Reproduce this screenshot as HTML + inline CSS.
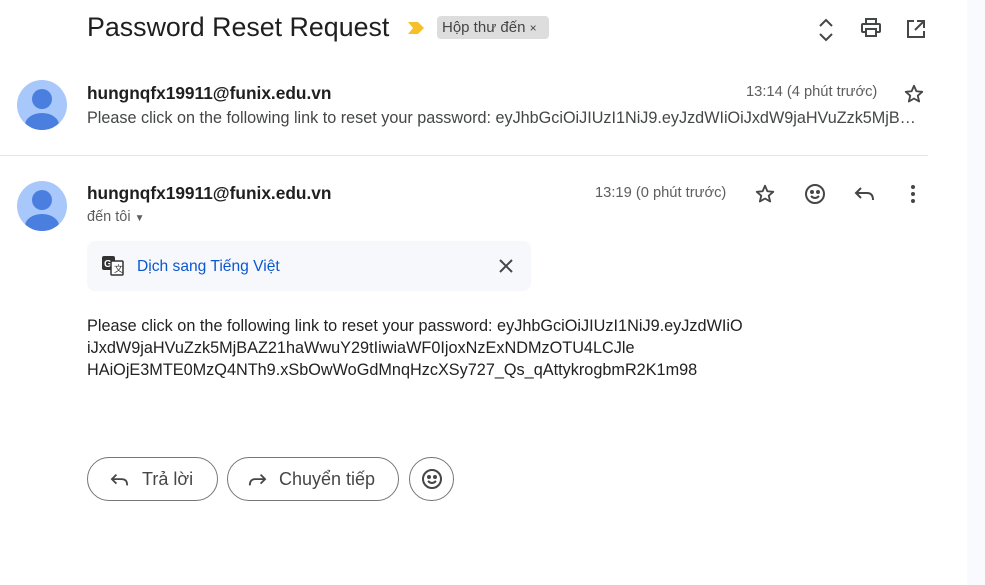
<!DOCTYPE html>
<html><head><meta charset="utf-8"><style>
*{margin:0;padding:0;box-sizing:border-box}
body{width:985px;height:585px;background:#fff;font-family:"Liberation Sans",Arial,sans-serif;color:#1f1f1f;position:relative;overflow:hidden}
.a{position:absolute;white-space:nowrap}
.side{position:absolute;left:967px;top:0;width:18px;height:585px;background:#f8fafd}
.av{position:absolute;width:50px;height:50px;border-radius:50%;background:#a8c7fa;overflow:hidden}
.av:before{content:"";position:absolute;left:15px;top:9px;width:20px;height:20px;border-radius:50%;background:#4a7fe0}
.av:after{content:"";position:absolute;left:8px;top:33px;width:34px;height:24px;border-radius:50%;background:#4a7fe0}
.btn{position:absolute;top:457px;height:44px;border:1px solid #747775;border-radius:22px;font-size:18px;color:#444746}
svg{position:absolute}
</style></head><body>
<div class="side"></div>
<div class="a" style="left:87px;top:12px;font-size:26.8px;color:#1f1f1f">Password Reset Request</div>
<svg style="left:407px;top:21px" width="18" height="14" viewBox="0 0 18 14"><path d="M1 1h10l6 6-6 6H1l5-6z" fill="#f6c02c"/></svg>
<div class="a" style="left:437px;top:16px;height:23px;width:112px;background:#dddddd;border-radius:4px;padding:3px 5px;font-size:15px;color:#444">Hộp thư đến <span style="font-size:12px">×</span></div>
<svg style="left:816px;top:18px" width="20" height="24" viewBox="0 0 20 24" fill="none" stroke="#444746" stroke-width="2"><path d="M4 8l6-6 6 6M4 16l6 6 6-6"/></svg>
<svg style="left:860px;top:18px" width="22" height="20" viewBox="0 0 22 20" fill="none" stroke="#444746" stroke-width="2"><rect x="6" y="1" width="10" height="5"/><rect x="2" y="6" width="18" height="8" rx="1"/><rect x="6" y="11" width="10" height="7" fill="#fff"/></svg>
<svg style="left:906px;top:19px" width="20" height="20" viewBox="0 0 20 20" fill="none" stroke="#444746" stroke-width="2"><path d="M8 2H2v16h16v-6M11 2h7v7M18 2L9 11"/></svg>

<div class="av" style="left:17px;top:80px"></div>
<div class="a" style="left:87px;top:83px;font-size:17.3px;font-weight:bold">hungnqfx19911@funix.edu.vn</div>
<div class="a" style="left:746px;top:84px;font-size:14.7px;color:#5e5e5e">13:14 (4 phút trước)</div>
<svg style="left:903px;top:83px" width="22" height="22" viewBox="0 0 24 24"><path d="M12 3l2.6 6 6.4.6-4.9 4.3 1.5 6.3L12 16.9 6.4 20.2l1.5-6.3L3 9.6l6.4-.6z" fill="none" stroke="#444746" stroke-width="2" stroke-linejoin="round"/></svg>
<div class="a" style="left:87px;top:109px;width:832px;overflow:hidden;text-overflow:ellipsis;font-size:16.2px;color:#444746">Please click on the following link to reset your password: eyJhbGciOiJIUzI1NiJ9.eyJzdWIiOiJxdW9jaHVuZzk5MjBAZ21haWwuY29tIiwiaWF0</div>
<div style="position:absolute;left:0;top:155px;width:928px;height:1px;background:#e5e5e5"></div>

<div class="av" style="left:17px;top:181px"></div>
<div class="a" style="left:87px;top:183px;font-size:17.3px;font-weight:bold">hungnqfx19911@funix.edu.vn</div>
<div class="a" style="left:595px;top:185px;font-size:14.7px;color:#5e5e5e">13:19 (0 phút trước)</div>
<div class="a" style="left:87px;top:209px;font-size:14.5px;color:#5e5e5e">đến tôi <span style="font-size:10px">▼</span></div>
<svg style="left:754px;top:183px" width="22" height="22" viewBox="0 0 24 24"><path d="M12 3l2.6 6 6.4.6-4.9 4.3 1.5 6.3L12 16.9 6.4 20.2l1.5-6.3L3 9.6l6.4-.6z" fill="none" stroke="#444746" stroke-width="2" stroke-linejoin="round"/></svg>
<svg style="left:803px;top:182px" width="24" height="24" viewBox="0 0 24 24" fill="none" stroke="#444746" stroke-width="2"><circle cx="12" cy="12" r="9"/><circle cx="9" cy="10" r="1" fill="#444746"/><circle cx="15" cy="10" r="1" fill="#444746"/><path d="M8 14q4 4 8 0"/></svg>
<svg style="left:854px;top:184px" width="22" height="20" viewBox="0 0 22 20" fill="none" stroke="#444746" stroke-width="2"><path d="M7 4L2 9l5 5M2 9h11q6 0 6 7"/></svg>
<svg style="left:910px;top:184px" width="6" height="20" viewBox="0 0 6 20" fill="#444746"><circle cx="3" cy="3" r="2"/><circle cx="3" cy="10" r="2"/><circle cx="3" cy="17" r="2"/></svg>

<div style="position:absolute;left:87px;top:241px;width:444px;height:50px;background:#f6f8fc;border-radius:8px"></div>
<svg style="left:102px;top:256px" width="22" height="20" viewBox="0 0 22 20"><rect x="0" y="0" width="13" height="14" rx="2" fill="#333"/><text x="2" y="11" font-size="10" font-weight="bold" fill="#fff" font-family="Liberation Sans">G</text><rect x="9" y="5" width="12" height="14" rx="1" fill="#fff" stroke="#333" stroke-width="1.5"/><text x="12" y="16" font-size="9" fill="#333" font-family="Liberation Sans">文</text></svg>
<div class="a" style="left:137px;top:258px;font-size:15.6px;color:#0b57d0">Dịch sang Tiếng Việt</div>
<svg style="left:499px;top:259px" width="14" height="14" viewBox="0 0 14 14" stroke="#444746" stroke-width="2"><path d="M1 1l12 12M13 1L1 13"/></svg>

<div class="a" style="left:87px;top:315px;font-size:16.25px;line-height:22px;color:#222">Please click on the following link to reset your password: eyJhbGciOiJIUzI1NiJ9.eyJzdWIiO<br>iJxdW9jaHVuZzk5MjBAZ21haWwuY29tIiwiaWF0IjoxNzExNDMzOTU4LCJle<br>HAiOjE3MTE0MzQ4NTh9.xSbOwWoGdMnqHzcXSy727_Qs_qAttykrogbmR2K1m98</div>

<div class="btn" style="left:87px;width:131px"><svg style="left:22px;top:13px" width="20" height="18" viewBox="0 0 22 20" fill="none" stroke="#444746" stroke-width="2"><path d="M7 4L2 9l5 5M2 9h11q6 0 6 7"/></svg><span class="a" style="left:54px;top:11px">Trả lời</span></div>
<div class="btn" style="left:227px;width:172px"><svg style="left:19px;top:13px" width="20" height="18" viewBox="0 0 22 20" fill="none" stroke="#444746" stroke-width="2"><path d="M15 4l5 5-5 5M20 9H9q-6 0-6 7"/></svg><span class="a" style="left:51px;top:11px">Chuyển tiếp</span></div>
<div class="btn" style="left:409px;width:45px"><svg style="left:10px;top:9px" width="24" height="24" viewBox="0 0 24 24" fill="none" stroke="#444746" stroke-width="2"><circle cx="12" cy="12" r="9"/><circle cx="9" cy="10" r="1" fill="#444746"/><circle cx="15" cy="10" r="1" fill="#444746"/><path d="M8 14q4 4 8 0"/></svg></div>
</body></html>
